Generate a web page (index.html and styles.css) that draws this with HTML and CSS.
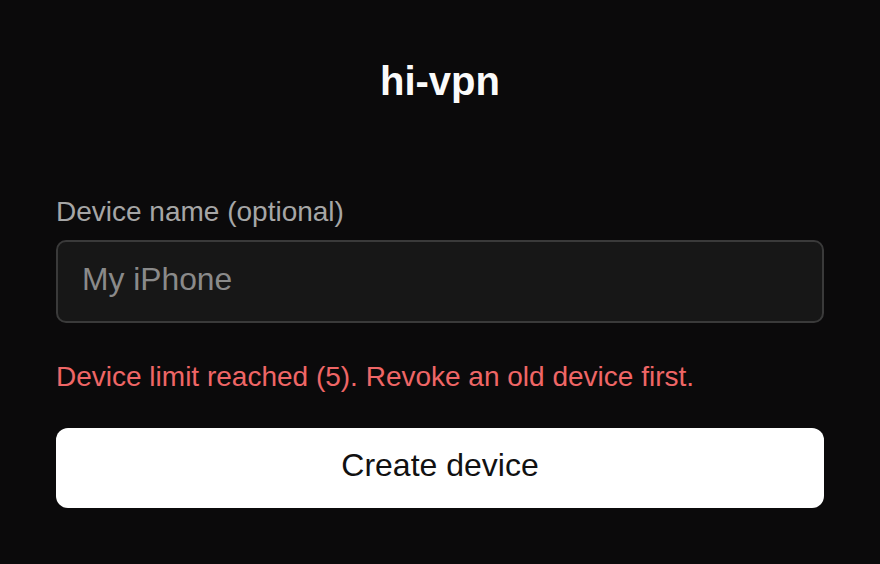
FILE: index.html
```html
<!DOCTYPE html>
<html lang="en">
<head>
<meta charset="utf-8">
<title>hi-vpn</title>
<link rel="stylesheet" href="styles.css">
</head>
<body>
<main class="page">
  <h1 class="title">hi-vpn</h1>
  <form class="form">
    <label class="label" for="device-name">Device name (optional)</label>
    <input class="input" id="device-name" type="text" placeholder="My iPhone">
    <p class="error">Device limit reached (5). Revoke an old device first.</p>
    <button class="button" type="button">Create device</button>
  </form>
</main>
</body>
</html>
```
FILE: styles.css
```css
html, body {
  margin: 0;
  padding: 0;
  background: #0b0a0b;
  height: 100%;
}
body {
  font-family: "Liberation Sans", Arial, sans-serif;
  color: #fafafa;
}
.page {
  padding: 57px 56px 0;
}
.title {
  margin: 0;
  font-size: 40px;
  line-height: 48px;
  font-weight: 700;
  text-align: center;
  color: #fafafa;
}
.form {
  display: flex;
  flex-direction: column;
  margin-top: 91px;
}
.label {
  font-size: 28px;
  line-height: 32px;
  color: #a6a6a6;
}
.input {
  margin-top: 12px;
  box-sizing: border-box;
  height: 83px;
  width: 100%;
  padding: 0 24px 5px;
  border: 2px solid #3a3a3a;
  border-radius: 10px;
  background: #171717;
  color: #e5e5e5;
  font-family: "Liberation Sans", Arial, sans-serif;
  font-size: 31.8px;
  outline: none;
}
.input::placeholder {
  color: #8a8a8a;
}
.error {
  margin: 38px 0 0;
  font-size: 28px;
  line-height: 32px;
  color: #ef6666;
}
.button {
  margin-top: 35px;
  box-sizing: border-box;
  height: 80px;
  width: 100%;
  padding: 0 0 6px;
  border: none;
  border-radius: 12px;
  background: #ffffff;
  color: #111111;
  font-family: "Liberation Sans", Arial, sans-serif;
  font-size: 32px;
  cursor: pointer;
}
```
